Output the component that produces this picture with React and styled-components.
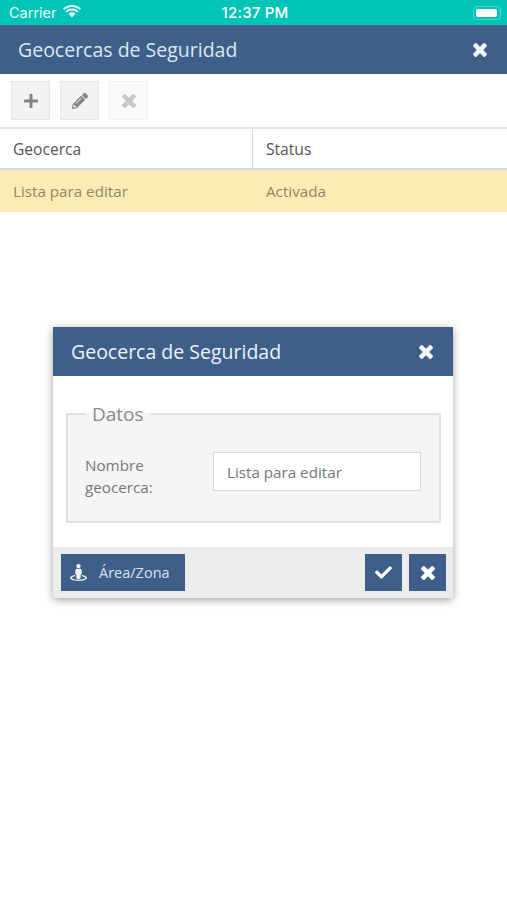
import React from 'react';
import styled, { createGlobalStyle } from 'styled-components';
import { FaPlus, FaPencilAlt, FaCheck, FaStreetView } from 'react-icons/fa';

const NAVY = '#3e5f8a';

function Wifi() {
  return (
    <svg width="18" height="14" viewBox="0 0 20 15" fill="#fff">
      <path d="M10 3C6.600 3 3.600 4.200 1.400 6.300L0 4.700C2.700 2.200 6.200 .7 10 .7s7.300 1.500 10 4l-1.400 1.600C16.400 4.200 13.400 3 10 3z" />
      <path d="M10 7c-2.300 0-4.300.8-5.800 2.200L2.800 7.700C4.700 5.900 7.200 4.800 10 4.800s5.300 1.100 7.200 2.900l-1.400 1.500C14.300 7.800 12.300 7 10 7z" />
      <path d="M10 9c1.500 0 2.900.6 3.900 1.500L10 14.600l-3.900-4.100C7.100 9.600 8.500 9 10 9z" />
    </svg>
  );
}

// chunky rounded cross, the Font Awesome 4 shape
function Cross({ size = 14, color = 'currentColor' }) {
  return (
    <svg width={size} height={size} viewBox="110 232 1188 1188" fill={color}>
      <path d="M1298 1188q0 40-28 68l-136 136q-28 28-68 28t-68-28l-294-294-294 294q-28 28-68 28t-68-28l-136-136q-28-28-28-68t28-68l294-294-294-294q-28-28-28-68t28-68l136-136q28-28 68-28t68 28l294 294 294-294q28-28 68-28t68 28l136 136q28 28 28 68t-28 68l-294 294 294 294q28 28 28 68z" />
    </svg>
  );
}

export default function App() {
  return (
    <>
      <GlobalStyle />
      <Page>
        <StatusBar>
          <Carrier>
            Carrier <Wifi />
          </Carrier>
          <Clock>12:37 PM</Clock>
          <Battery>
            <BatteryFill />
          </Battery>
        </StatusBar>
        <Header>
          <HeaderTitle>Geocercas de Seguridad</HeaderTitle>
          <Cross color="#f2f4f7" />
        </Header>
        <Toolbar>
          <ToolButton>
            <FaPlus />
          </ToolButton>
          <ToolButton>
            <FaPencilAlt />
          </ToolButton>
          <ToolButton $disabled>
            <Cross />
          </ToolButton>
        </Toolbar>
        <TableHead>
          <HeadCell>Geocerca</HeadCell>
          <HeadCell>Status</HeadCell>
        </TableHead>
        <SelectedRow>
          <RowCell>Lista para editar</RowCell>
          <RowCell>Activada</RowCell>
        </SelectedRow>

        <Modal>
          <ModalHeader>
            <ModalTitle>Geocerca de Seguridad</ModalTitle>
            <Cross color="#f2f4f7" />
          </ModalHeader>
          <ModalBody>
            <Fieldset>
              <Legend>Datos</Legend>
              <FieldRow>
                <FieldLabel>Nombre geocerca:</FieldLabel>
                <TextInput readOnly value="Lista para editar" />
              </FieldRow>
            </Fieldset>
          </ModalBody>
          <ModalFooter>
            <ZoneButton>
              <FaStreetView />
              <span>Área/Zona</span>
            </ZoneButton>
            <FooterActions>
              <ActionButton>
                <FaCheck />
              </ActionButton>
              <ActionButton>
                <Cross />
              </ActionButton>
            </FooterActions>
          </ModalFooter>
        </Modal>
      </Page>
    </>
  );
}

//-----Styled Components-----
const GlobalStyle = createGlobalStyle`
  html, body {
    margin: 0;
    background: #fff;
    font-family: 'Open Sans', sans-serif;
  }
  * {
    box-sizing: border-box;
  }
`;

const Page = styled.div`
  position: relative;
  width: 507px;
  height: 900px;
  overflow: hidden;
  background: #fff;
`;

const StatusBar = styled.div`
  display: grid;
  grid-template-columns: 1fr auto 1fr;
  align-items: center;
  height: 25px;
  padding: 0 6px 0 9px;
  background: #00c4b6;
  color: #fff;
  font-family: 'Inter', sans-serif;
`;

const Carrier = styled.div`
  display: flex;
  align-items: center;
  gap: 6px;
  font-size: 14.5px;
  opacity: 0.9;
  svg {
    margin-bottom: 3px;
  }
`;

const Clock = styled.div`
  font-size: 15px;
  font-weight: 500;
  letter-spacing: 0.2px;
`;

const Battery = styled.div`
  justify-self: end;
  width: 28px;
  height: 14px;
  padding: 2px;
  border: 1px solid rgba(255, 255, 255, 0.3);
  border-radius: 4px;
`;

const BatteryFill = styled.div`
  width: 21px;
  height: 100%;
  background: #fff;
  border-radius: 2px;
`;

const Header = styled.div`
  display: flex;
  align-items: center;
  justify-content: space-between;
  height: 49px;
  padding: 0 20px 0 18px;
  background: ${NAVY};
  color: #dfe6ef;
`;

const HeaderTitle = styled.div`
  font-size: 19.5px;
`;

const Toolbar = styled.div`
  display: flex;
  gap: 10px;
  align-items: center;
  height: 55px;
  padding: 0 11px;
  border-bottom: 2px solid #e6e6e6;
`;

const ToolButton = styled.div`
  display: flex;
  align-items: center;
  justify-content: center;
  width: 39px;
  height: 39px;
  background: ${(props) => (props.$disabled ? '#fafafa' : '#f3f3f3')};
  border: 1px solid ${(props) => (props.$disabled ? '#f3f3f3' : '#e6e6e6')};
  color: ${(props) => (props.$disabled ? '#c8c8c8' : '#848484')};
  font-size: 16px;
`;

const TableHead = styled.div`
  display: grid;
  grid-template-columns: 253px 1fr;
  height: 41px;
  border-bottom: 2px solid #d8d8d8;
`;

const HeadCell = styled.div`
  display: flex;
  align-items: center;
  padding-left: 13px;
  color: #555;
  font-size: 15.6px;
  &:first-child {
    border-right: 1px solid #d8d8d8;
  }
`;

const SelectedRow = styled.div`
  display: grid;
  grid-template-columns: 253px 1fr;
  height: 42px;
  background: #fdebb5;
`;

const RowCell = styled.div`
  display: flex;
  align-items: center;
  padding-left: 13px;
  color: #8f8868;
  font-size: 15.2px;
`;

const Modal = styled.div`
  position: absolute;
  top: 327px;
  left: 53px;
  width: 400px;
  height: 271px;
  display: flex;
  flex-direction: column;
  background: #fff;
  border-radius: 0 0 4px 4px;
  box-shadow: 0 2px 8px rgba(0, 0, 0, 0.38);
`;

const ModalHeader = styled.div`
  display: flex;
  align-items: center;
  justify-content: space-between;
  height: 49px;
  padding: 0 20px 0 18px;
  background: ${NAVY};
  color: #eef1f5;
`;

const ModalTitle = styled.div`
  font-size: 19.5px;
`;

const ModalBody = styled.div`
  flex: 1;
  padding: 26px 12px 0 13px;
`;

const Fieldset = styled.fieldset`
  height: 121px;
  margin: 0;
  padding: 0 18px 0 17px;
  background: #f5f5f5;
  border: 2px solid #e0e0e0;
`;

const Legend = styled.legend`
  margin-left: 0;
  padding: 0 7px;
  color: #8a8a8a;
  font-size: 19px;
  line-height: 24px;
`;

const FieldRow = styled.div`
  display: flex;
  align-items: flex-start;
  justify-content: space-between;
  padding-top: 26px;
`;

const FieldLabel = styled.div`
  width: 90px;
  margin-top: 2px;
  color: #777;
  font-size: 15.2px;
  line-height: 22px;
`;

const TextInput = styled.input`
  width: 208px;
  height: 39px;
  padding: 0 13px;
  background: #fff;
  border: 1px solid #d8d8d8;
  color: #777;
  font-family: inherit;
  font-size: 15.2px;
  outline: none;
`;

const ModalFooter = styled.div`
  display: flex;
  align-items: center;
  justify-content: space-between;
  height: 51px;
  padding: 0 7px 0 8px;
  background: #ececec;
  border-radius: 0 0 4px 4px;
`;

const ZoneButton = styled.div`
  display: flex;
  align-items: center;
  gap: 12px;
  width: 124px;
  height: 37px;
  padding-left: 9px;
  background: ${NAVY};
  color: #d9e0ea;
  font-size: 14.5px;
  svg {
    color: #f2f4f7;
    font-size: 17px;
  }
`;

const FooterActions = styled.div`
  display: flex;
  gap: 7px;
`;

const ActionButton = styled.div`
  display: flex;
  align-items: center;
  justify-content: center;
  width: 37px;
  height: 37px;
  background: ${NAVY};
  color: #fff;
  font-size: 17px;
`;
